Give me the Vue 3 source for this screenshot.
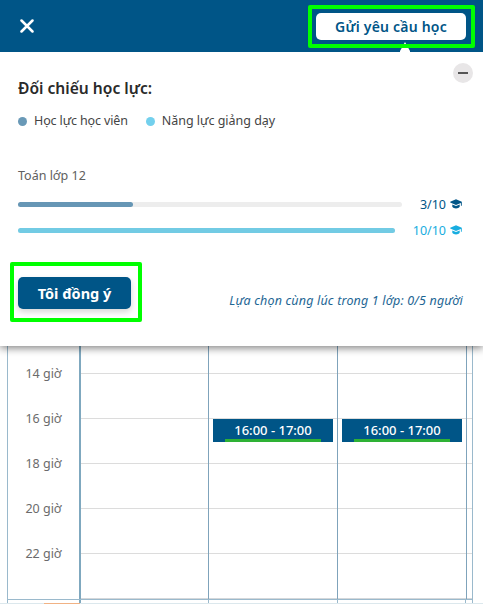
<template>
  <div class="booking">
    <header class="topbar">
      <button class="close-btn" aria-label="Đóng">
        <svg width="14" height="14" viewBox="0 0 14 14">
          <path d="M1.5 1.5 12.5 12.5M12.5 1.5 1.5 12.5" stroke="#fff" stroke-width="2.5" stroke-linecap="round" />
        </svg>
      </button>
      <div class="request">
        <button class="request-btn">Gửi yêu cầu học</button>
        <i class="request-arrow"></i>
        <i class="highlight highlight-request"></i>
      </div>
    </header>

    <section class="panel">
      <button class="collapse-btn" aria-label="Thu gọn"><i></i></button>
      <h2 class="panel-title">Đối chiếu học lực:</h2>
      <ul class="legend">
        <li class="legend-student">Học lực học viên</li>
        <li class="legend-teacher">Năng lực giảng dạy</li>
      </ul>
      <div class="subject">Toán lớp 12</div>
      <div v-for="level in levels" :key="level.type" class="level" :class="'level-' + level.type">
        <div class="track">
          <div class="fill" :style="{ width: level.score * 10 + '%' }"></div>
        </div>
        <span class="score">{{ level.score }}/10</span>
        <svg class="cap" width="12" height="10" viewBox="0 0 12 10" fill="currentColor">
          <path d="M6 .3 11.8 2.8v3.9h-.9V4.1L6 6.1.2 3.6v-.9z" />
          <path d="M2.3 5.4 6 7l3.7-1.6v2.4C8.2 9.9 3.8 9.9 2.3 7.8z" />
        </svg>
      </div>
      <div class="panel-footer">
        <div class="agree">
          <button class="agree-btn">Tôi đồng ý</button>
          <i class="highlight highlight-agree"></i>
        </div>
        <em class="capacity">Lựa chọn cùng lúc trong 1 lớp: 0/5 người</em>
      </div>
    </section>

    <main class="calendar">
      <div class="hours">
        <div v-for="hour in hours" :key="hour" class="hour">{{ hour }} giờ</div>
      </div>
      <div v-for="(day, i) in days" :key="i" class="day">
        <div v-for="hour in hours" :key="hour" class="slot">
          <div v-if="day[hour]" class="event">{{ day[hour] }}</div>
        </div>
      </div>
      <div class="gutter">
        <div v-for="hour in hours" :key="hour" class="slot"></div>
      </div>
    </main>
    <footer class="next-row">
      <i class="tail tail-hours"></i>
      <i class="tail tail-first"></i>
      <i class="tail"></i>
      <i class="tail tail-last"></i>
    </footer>
    <div class="bottom-edge"></div>
  </div>
</template>

<script setup>
const levels = [
  { type: 'student', score: 3 },
  { type: 'teacher', score: 10 },
];

const hours = [14, 16, 18, 20, 22];

// Занятия по дням, ключ — час начала
const days = [{}, { 16: '16:00 - 17:00' }, { 16: '16:00 - 17:00' }];
</script>

<style>
body {
  background: #fff;
}
</style>

<style scoped>
.booking {
  height: 604px;
  overflow: hidden;
  display: flex;
  flex-direction: column;
  font-family: "Noto Sans", "Open Sans", sans-serif;
  font-size: 13px;
  color: #444;
}

.booking * {
  box-sizing: border-box;
}

button {
  border: none;
  padding: 0;
  font-family: inherit;
  cursor: pointer;
}

.topbar {
  height: 52px;
  flex-shrink: 0;
  background: #005587;
  display: flex;
  justify-content: space-between;
  padding: 13px 17px 0 20px;
  position: relative;
  z-index: 3;
}

.close-btn {
  background: none;
  width: 15px;
  height: 15px;
  margin-top: 5px;
}

.close-btn svg {
  display: block;
}

.request,
.agree {
  position: relative;
}

.request-btn {
  display: block;
  width: 150px;
  height: 27px;
  border-radius: 5px;
  background: #fff;
  color: #005587;
  font-size: 14px;
  font-weight: 600;
  line-height: 26px;
  letter-spacing: 0.2px;
}

.request-arrow {
  position: absolute;
  left: 84px;
  top: 29px;
  width: 10px;
  height: 10px;
  background: #fff;
  clip-path: polygon(50% 0, 100% 90%, 100% 100%, 0 100%, 0 90%);
}

.highlight {
  position: absolute;
  border: 4px solid #0f0;
  border-radius: 2px;
  pointer-events: none;
}

.highlight-request {
  left: -8px;
  top: -8px;
  width: 167px;
  height: 43px;
}

.highlight-agree {
  left: -8px;
  top: -15px;
  width: 132px;
  height: 60px;
}

.panel {
  height: 294px;
  flex-shrink: 0;
  position: relative;
  z-index: 2;
  background: #fff;
  padding: 25px 20px 0 18px;
  box-shadow: 0 2px 8px rgba(0, 0, 0, 0.5);
}

.collapse-btn {
  position: absolute;
  right: 10px;
  top: 11px;
  width: 20px;
  height: 20px;
  border-radius: 50%;
  background: #e8e6e7;
  display: flex;
  align-items: center;
  justify-content: center;
}

.collapse-btn i {
  width: 10px;
  height: 2px;
  background: #555;
}

.panel-title {
  margin: 0;
  height: 22px;
  line-height: 22px;
  font-size: 15.6px;
  font-weight: 600;
  color: #2a2a2a;
}

.legend {
  display: flex;
  gap: 18px;
  margin: 12px 0 0;
  padding: 0;
  list-style: none;
  line-height: 20px;
  font-size: 12.5px;
  letter-spacing: -0.13px;
}

.legend li {
  display: flex;
  align-items: center;
  gap: 7px;
  white-space: nowrap;
}

.legend li::before {
  content: "";
  width: 9px;
  height: 9px;
  border-radius: 50%;
  background: #6999b7;
}

.legend .legend-teacher {
  letter-spacing: -0.02px;
}

.legend .legend-teacher::before {
  background: #73d0ed;
}

.subject {
  margin-top: 35px;
  height: 20px;
  line-height: 20px;
  font-size: 12.5px;
  color: #606060;
}

.level {
  display: flex;
  align-items: center;
  height: 26px;
}

.subject + .level {
  margin-top: 5px;
}

.track {
  flex: 1;
  height: 5px;
  border-radius: 3px;
  background: #ededed;
}

.fill {
  height: 100%;
  border-radius: 3px;
  background: #6696b5;
}

.score {
  margin-left: 18px;
  font-size: 12.5px;
}

.cap {
  margin-left: 4px;
  margin-right: 1px;
}

.level-student {
  color: #005587;
}

.level-teacher {
  color: #18ade0;
}

.level-teacher .fill {
  background: #72cbe4;
}

.panel-footer {
  display: flex;
  justify-content: space-between;
  margin-top: 34px;
}

.agree-btn {
  display: block;
  width: 113px;
  height: 32px;
  border-radius: 5px;
  background: #005587;
  color: #fff;
  font-size: 14.5px;
  font-weight: 700;
  line-height: 32px;
  box-shadow: 0 3px 6px rgba(0, 0, 0, 0.16);
}

.capacity {
  margin-top: 14px;
  line-height: 20px;
  font-size: 12.5px;
  letter-spacing: 0.18px;
  color: #1e6694;
  white-space: nowrap;
}

.calendar {
  display: flex;
  width: 466px;
  height: 254px;
  flex-shrink: 0;
  margin-left: 7px;
  border: 1px solid #9ab9cc;
  border-top: none;
  padding-top: 27px;
  position: relative;
}

/* Вертикальные линии часов, уходящих под панель */
.calendar::before {
  content: "";
  position: absolute;
  inset: 0 0 auto;
  height: 27px;
  background: linear-gradient(to right, transparent 71px, #7fa8bf 71px 73px, transparent 73px 200px, #7fa3bb 200px 201px, transparent 201px 329px, #7fa3bb 329px 330px, transparent 330px 458px, #7fa3bb 458px 459px, transparent 459px);
}

.hours {
  width: 73px;
  border-right: 2px solid #7fa8bf;
  margin-top: -9px;
  padding-top: 0;
}

.hours::after {
  content: "";
  display: block;
  height: 9px;
}

.hour {
  height: 45px;
  text-align: center;
  font-size: 12.5px;
  line-height: 20px;
  color: #6b6b6b;
}

.day {
  width: 129px;
  border-right: 1px solid #7fa3bb;
}

.hours + .day {
  width: 128px;
}

.gutter {
  flex: 1;
}

.slot {
  height: 45px;
  border-top: 1px solid #dcdcdc;
}

.slot:last-child {
  border-bottom: 1px solid #d4d7da;
  height: 46px;
}

.event {
  width: 120px;
  height: 23px;
  margin-left: 4px;
  background: linear-gradient(#2eb135, #2eb135) 12px 20px / 96px 3px no-repeat #005587;
  color: #fff;
  font-size: 13px;
  font-weight: 500;
  line-height: 23px;
  text-align: center;
}

.next-row {
  display: flex;
  height: 3px;
  flex-shrink: 0;
  width: 466px;
  margin-left: 7px;
  border: solid #9ab9cc;
  border-width: 0 1px;
}

.tail {
  width: 129px;
  border-right: 1px solid #9ab9cc;
}

.tail-hours {
  width: 73px;
  border-right: 2px solid #7fa8bf;
}

.tail-first,
.tail-last {
  width: 128px;
}

.bottom-edge {
  height: 1px;
  background: linear-gradient(to right, #dce8ed 44px, #f1b284 44px 80px, #dce8ed 80px);
}
</style>
